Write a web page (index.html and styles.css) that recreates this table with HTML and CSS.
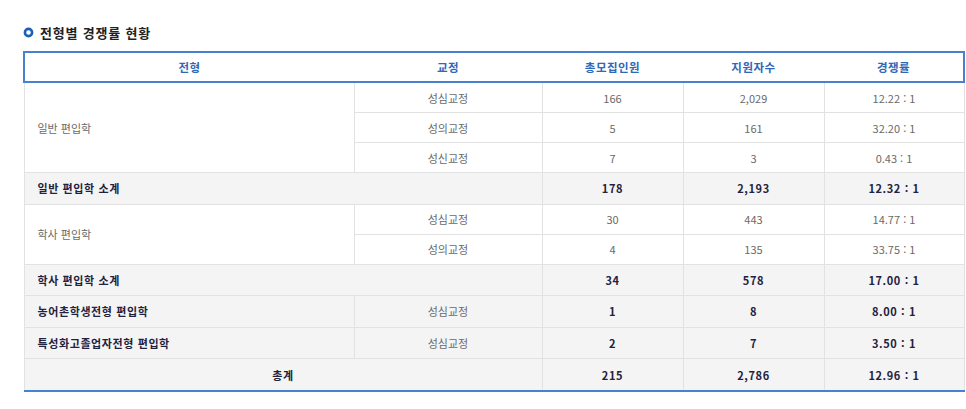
FILE: index.html
```html
<!DOCTYPE html>
<html lang="ko">
<head>
<meta charset="utf-8">
<title>전형별 경쟁률 현황</title>
<link rel="stylesheet" href="styles.css">
</head>
<body>
<div class="wrap">
  <h3 class="title">
    <svg class="bullet" width="11" height="11" viewBox="0 0 11 11"><circle cx="5.5" cy="5.5" r="3.6" fill="#fff" stroke="#1d5fb4" stroke-width="2.6"/></svg>
    <span>전형별 경쟁률 현황</span>
  </h3>
  <table class="rate">
    <colgroup>
      <col class="c1"><col class="c2"><col class="c3"><col class="c4"><col class="c5">
    </colgroup>
    <thead>
      <tr><th>전형</th><th>교정</th><th>총모집인원</th><th>지원자수</th><th>경쟁률</th></tr>
    </thead>
    <tbody>
      <tr><td rowspan="3" class="name">일반 편입학</td><td>성심교정</td><td>166</td><td>2,029</td><td>12.22 : 1</td></tr>
      <tr><td>성의교정</td><td>5</td><td>161</td><td>32.20 : 1</td></tr>
      <tr><td>성신교정</td><td>7</td><td>3</td><td>0.43 : 1</td></tr>
      <tr class="sum"><td colspan="2" class="name">일반 편입학 소계</td><td>178</td><td>2,193</td><td>12.32 : 1</td></tr>
      <tr><td rowspan="2" class="name">학사 편입학</td><td>성심교정</td><td>30</td><td>443</td><td>14.77 : 1</td></tr>
      <tr><td>성의교정</td><td>4</td><td>135</td><td>33.75 : 1</td></tr>
      <tr class="sum"><td colspan="2" class="name">학사 편입학 소계</td><td>34</td><td>578</td><td>17.00 : 1</td></tr>
      <tr class="sum"><td class="name">농어촌학생전형 편입학</td><td class="campus">성심교정</td><td>1</td><td>8</td><td>8.00 : 1</td></tr>
      <tr class="sum"><td class="name">특성화고졸업자전형 편입학</td><td class="campus">성심교정</td><td>2</td><td>7</td><td>3.50 : 1</td></tr>
      <tr class="sum total"><td colspan="2">총계</td><td>215</td><td>2,786</td><td>12.96 : 1</td></tr>
    </tbody>
  </table>
</div>
</body>
</html>
```
FILE: styles.css
```css
html, body {
  margin: 0;
  padding: 0;
  background: #fff;
}
body {
  font-family: "Noto Sans CJK KR", "Noto Sans", sans-serif;
}
.wrap {
  padding: 24px 0 0 23px;
}
.title {
  display: flex;
  align-items: center;
  gap: 6px;
  margin: 0 0 11px 0;
  height: 16px;
  font-size: 13px;
  font-weight: 700;
  letter-spacing: 0.8px;
  color: #222;
}
.bullet {
  display: block;
}
.rate {
  border-collapse: collapse;
  table-layout: fixed;
  width: 940px;
}
.c1 { width: 330px; }
.c2 { width: 188px; }
.c3 { width: 141px; }
.c4 { width: 141px; }
.c5 { width: 140px; }
.rate th {
  height: 28px;
  padding: 0;
  font-size: 11.5px;
  font-weight: 700;
  color: #2f68b8;
  letter-spacing: 0.5px;
  border-top: 2px solid #4682d0;
  border-bottom: 2px solid #4682d0;
  text-align: center;
}
.rate th:first-child { border-left: 2px solid #4682d0; }
.rate th:last-child { border-right: 2px solid #4682d0; }
.rate td {
  height: 29px;
  padding: 0;
  font-size: 11px;
  color: #6a6a6a;
  text-align: center;
  border: 1px solid #e2e2e2;
}
.rate td.name {
  text-align: left;
  padding-left: 13px;
}
.rate tr.sum td {
  height: 30.6px;
  background: #f4f4f4;
  color: #1f2240;
  font-weight: 700;
  letter-spacing: 0.6px;
}
.rate tr.sum td.campus {
  color: #6a6a6a;
  font-weight: 400;
  letter-spacing: 0;
}
.rate tr.total td {
  border-bottom: 2px solid #4682d0;
}
```
